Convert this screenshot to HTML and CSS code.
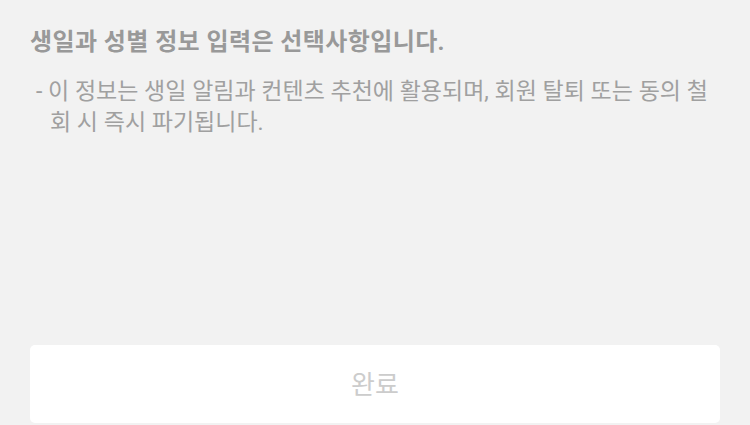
FILE: index.html
```html
<!DOCTYPE html>
<html lang="ko">
<head>
    <meta charset="UTF-8">
    <meta name="viewport" content="width=device-width, initial-scale=1.0">
    <title>선택사항 안내</title>
    <link rel="stylesheet" href="styles.css">
</head>
<body>

    <div class="page">
        <!-- 안내 문구 -->
        <div class="notice">
            <h2 class="notice-title">생일과 성별 정보 입력은 선택사항입니다.</h2>
            <p class="notice-desc">- 이 정보는 생일 알림과 컨텐츠 추천에 활용되며, 회원 탈퇴 또는 동의 철회 시 즉시 파기됩니다.</p>
        </div>

        <!-- 하단 완료 버튼 -->
        <div class="footer">
            <button class="done-btn" disabled>완료</button>
        </div>
    </div>

</body>
</html>
```

FILE: styles.css
```css
body, html {
    margin: 0;
    padding: 0;
    height: 100%;
    overflow: hidden;
}

body {
    background-color: #f2f2f2;
    font-family: Roboto, "Noto Sans CJK KR", sans-serif;
}

.page {
    display: flex;
    flex-direction: column;
    height: 100vh;
    padding: 0 30px 2px;
    box-sizing: border-box;
}

.notice {
    flex: 1;
    padding-top: 25px;
}

.notice-title {
    margin: 0;
    font-size: 24px;
    font-weight: 700;
    line-height: 34px;
    letter-spacing: 0.4px;
    color: #999999;
}

.notice-desc {
    margin: 17px 0 0;
    padding-left: 20px;
    text-indent: -14px;
    width: 668px;
    font-size: 23px;
    line-height: 31px;
    color: #a0a0a0;
    word-break: break-all;
}

.done-btn {
    display: block;
    width: 100%;
    height: 78px;
    border: none;
    border-radius: 5px;
    background-color: #fff;
    font-family: inherit;
    font-size: 26px;
    color: #cccccc;
    padding: 0 0 4px;
}
```
